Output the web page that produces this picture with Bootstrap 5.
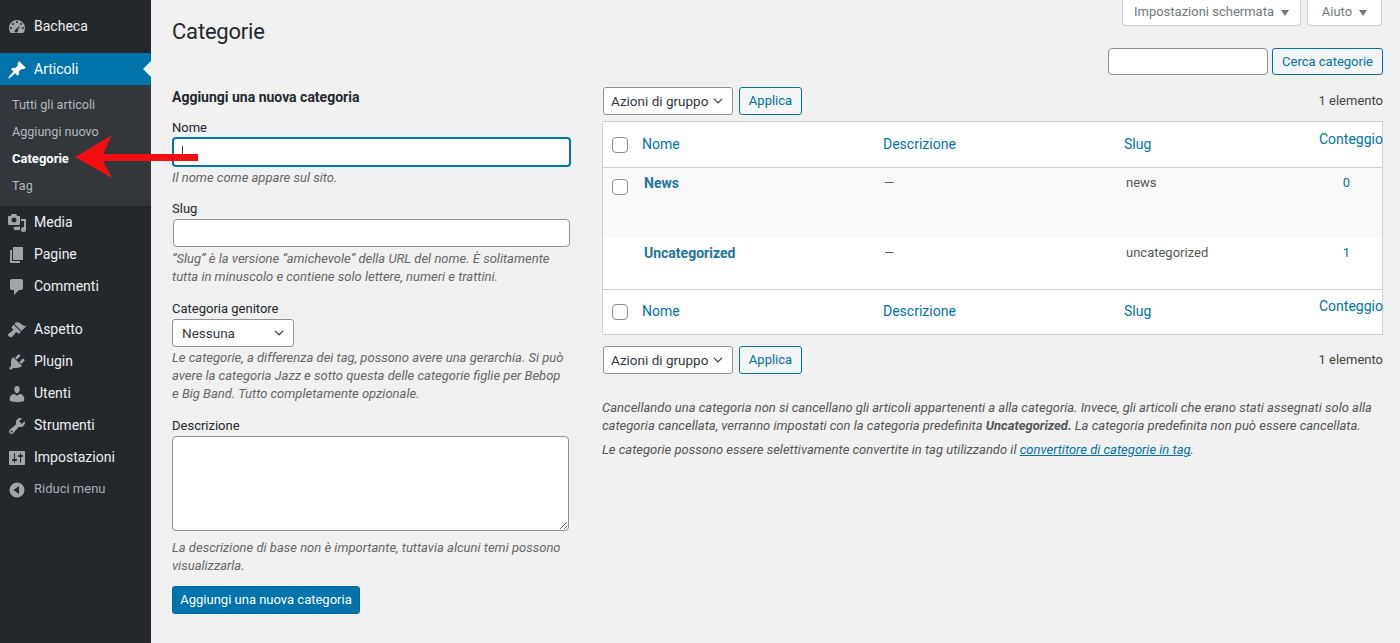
<!doctype html>
<html lang="it">
<head>
<meta charset="utf-8">
<title>Categorie</title>
<link href="https://cdn.jsdelivr.net/npm/bootstrap@5.3.0/dist/css/bootstrap.min.css" rel="stylesheet">
<style>
html,body{height:643px;overflow:hidden}
body{background:#f1f1f1;color:#444;font-family:Roboto,"Liberation Sans",sans-serif;font-size:13px;line-height:18.2px}
.wp-shell{height:643px;position:relative}
.wp-side{width:151px;flex:none;background:#23282d;padding-top:10px}
.wp-item{height:32px;color:#eee;font-size:14px;padding:1px 0 0;gap:0}
.wp-item:hover{color:#eee}
.wp-item svg{width:20px;height:20px;margin-left:7px;margin-right:7px;fill:#a0a5aa;flex:none}
.wp-item.gap-after{margin-bottom:11px}
.wp-item.wp-current{background:#0073aa;color:#fff;position:relative}
.wp-item.wp-current svg{fill:#fff}
.wp-item.wp-current::after{content:"";position:absolute;right:0;top:8px;border:8px solid transparent;border-right-color:#f1f1f1;border-left:0}
.wp-item.wp-muted{color:#a9adb1;font-size:13px}
.wp-sub{background:#32373c;padding:6px 0 7px;margin:0;list-style:none}
.wp-sub a{display:block;height:27px;line-height:27px;padding-left:12px;color:#b4b9be;font-size:12.6px;text-decoration:none}
.wp-sub a.on{color:#fff;font-weight:700;font-size:13px}
.wp-main{flex:1;padding:0 17px 0 21px;min-width:0}
.wp-head{height:48px}
.wp-title{font-size:22px;letter-spacing:-.2px;font-weight:400;color:#23282d;margin:19px 0 0;line-height:26px}
.wp-tabs{gap:6px;margin-right:1px}
.wp-tab{height:26px;background:#fff;border:1px solid #ccd0d4;border-top:0;border-radius:0 0 4px 4px;color:#72777c;padding:0;display:flex;align-items:center;justify-content:center;gap:7px;width:179px}
.wp-tab.wp-tab-sm{width:75px}
.wp-tab i{display:block;border:4.5px solid transparent;border-top:6px solid #72777c;border-bottom:0}
.wp-left{width:398px;flex:none;padding-top:40px}
.wp-right{width:781px;flex:none;margin-left:32px}
.wp-h2{font-size:14px;font-weight:700;color:#23282d;margin:0 0 13px;line-height:18px}
.wp-lab{display:block;margin:0;color:#23282d;line-height:18px}
.wp-lab.wp-lab-14{margin-top:14px}
.wp-lab.wp-lab-13{margin-top:13px}
.wp-input.form-control{height:28px;border:1px solid #8d9297;border-radius:4px;background:#fff;box-shadow:none;font-size:13px;padding:0 8px}
.wp-focus.form-control{height:30px;border:2px solid #0073aa;color:#32373c;margin:0;width:399px;padding:0 8px}
.wp-wide{width:397px;margin-left:1px;margin-top:1px}
.wp-help{font-style:italic;color:#666;margin:3px 0 0;line-height:18.2px;font-size:13px}
.wp-help.wp-help-tight{margin-top:2px}
.wp-select.form-select{height:28px;border:1px solid #8d9297;border-radius:3px;font-size:13.5px;color:#32373c;padding:0 18px 0 7px;background-color:#fff;background-position:right 8px center;background-size:12px 10px;box-shadow:none;line-height:26px}
.wp-select.wp-sel-parent{width:122px;margin-top:1px;padding-left:9px}
.wp-sel-bulk{width:130px;margin-left:1px}
.wp-help.wp-help-select{margin-top:2px}
.wp-area.form-control{height:95px;width:397px;border:1px solid #8d9297;border-radius:4px;margin-top:1px;box-shadow:none}
.wp-primary.btn{background:#0073aa;border:1px solid #006799;color:#fff;border-radius:3px;font-size:13px;height:28px;padding:0;line-height:26px;width:188px;margin-top:10px;white-space:nowrap}
.wp-ghost.btn{background:#f3f5f6;border:1px solid #0071a1;color:#0071a1;border-radius:3px;font-size:13px;height:28px;padding:0;line-height:26px;width:63px;white-space:nowrap}
.wp-ghost.wp-find.btn{height:27px;line-height:25px;width:111px}
.wp-input.wp-search{height:27px;width:160px;flex:none}
.wp-bar{height:28px;gap:6px}
.wp-bar.wp-bar-top{margin-top:12px;margin-bottom:6px}
.wp-bar.wp-bar-bottom{margin-top:11px}
.wp-count{margin-left:auto;color:#444}
.wp-tbl.table{table-layout:fixed;width:781px;margin:0;background:#fff;border:1px solid #ccd0d4;--bs-table-bg:transparent;color:#555;font-size:13px;border-collapse:separate;border-spacing:0}
.wp-tbl th,.wp-tbl td{border:0;padding:0;vertical-align:top;box-shadow:none}
.wp-tbl a{color:#0073aa;text-decoration:none;font-size:14px;font-weight:400}
.wp-tbl thead th{height:46px;border-bottom:1px solid #ccd0d4;vertical-align:middle;padding-left:8px;overflow:visible;white-space:nowrap}
.wp-tbl tfoot th{height:45px;border-top:1px solid #ccd0d4;vertical-align:middle;padding-left:8px;white-space:nowrap}
.wp-tbl thead .cnt-h{vertical-align:top;padding-top:8px;padding-left:8px}
.wp-tbl tfoot .cnt-h{vertical-align:top;padding-top:7px;padding-left:8px}
.wp-tbl .wp-row1 td{background:#f9f9f9;height:70px;padding:6px 0 0 10px}
.wp-tbl .wp-row2 td{background:#fff;height:51px;padding:6px 0 0 10px}
.wp-tbl tbody tr td:nth-child(3){padding-left:9px}
.wp-tbl td a.ttl{font-weight:700;font-size:14px;color:#21759b}
.wp-tbl tbody tr td.num{padding-left:0;text-align:center}
.wp-tbl td.num a{font-size:13px}
.wp-check{display:block;width:16px;height:16px;border:1px solid #8d9297;border-radius:4px;background:#fff;margin:0;appearance:none;-webkit-appearance:none}
.wp-tbl thead th.cb,.wp-tbl tfoot th.cb,.wp-tbl tbody tr td.cb{padding-left:9px}
.wp-tbl .wp-row1 td.cb{padding-top:11px}
.wp-notes{margin-top:25px;font-style:italic;color:#555;font-size:13px}
.wp-notes p{margin:0 0 6px;line-height:18.2px}
.wp-notes a{color:#0073aa}
.wp-arrow{position:absolute;left:70px;top:130px;width:135px;height:55px;pointer-events:none}
.wp-caret{position:absolute;left:182px;top:146px;width:1px;height:14px;background:#32373c}
</style>
</head>
<body>
<div class="wp-shell d-flex">
  <nav class="wp-side">
    <a href="#" class="wp-item gap-after d-flex align-items-center text-decoration-none"><svg viewBox="0 0 20 20"><path d="M3.76 16h12.48A7.97 7.97 0 0 0 18 11a8 8 0 1 0-16 0c0 1.9.66 3.64 1.76 5zM10 4a1 1 0 1 1 0 2 1 1 0 0 1 0-2zM6 6a1 1 0 1 1 0 2 1 1 0 0 1 0-2zm8 0a1 1 0 1 1 0 2 1 1 0 0 1 0-2zM4 10a1 1 0 1 1 0 2 1 1 0 0 1 0-2zm12 0a1 1 0 1 1 0 2 1 1 0 0 1 0-2zm-7.3 2.4L13 8.5l-2.2 5a1.6 1.6 0 1 1-2.1-1.1z" fill-rule="evenodd"/></svg>Bacheca</a>
    <a href="#" class="wp-item wp-current d-flex align-items-center text-decoration-none"><svg viewBox="0 0 20 20"><path d="M10.44 3.02l1.82-1.82 6.36 6.35-1.83 1.82c-1.05-.68-2.48-.57-3.41.36l-.75.75c-.92.93-1.04 2.35-.35 3.41l-1.83 1.82-2.41-2.41-2.8 2.79c-.42.42-3.38 2.71-3.8 2.29s1.86-3.39 2.28-3.81l2.79-2.79L4.1 9.36l1.83-1.82c1.05.69 2.48.57 3.4-.36l.75-.75c.93-.92 1.05-2.35.36-3.41z"/></svg>Articoli</a>
    <ul class="wp-sub">
      <li><a href="#">Tutti gli articoli</a></li>
      <li><a href="#">Aggiungi nuovo</a></li>
      <li><a href="#" class="on">Categorie</a></li>
      <li><a href="#">Tag</a></li>
    </ul>
    <a href="#" class="wp-item d-flex align-items-center text-decoration-none"><svg viewBox="0 0 20 20"><path d="M13 11V4c0-.55-.45-1-1-1h-1.67L9 1H5L3.67 3H2c-.55 0-1 .45-1 1v7c0 .55.45 1 1 1h10c.55 0 1-.45 1-1zM7 4.5a2.5 2.5 0 1 1 0 5 2.5 2.5 0 0 1 0-5zM14 6h5v10.5a2.5 2.5 0 0 1-5 0 2.5 2.5 0 0 1 3-2.45V8h-3V6zm-1 7.5V17H7l-.5-3z"/></svg>Media</a>
    <a href="#" class="wp-item d-flex align-items-center text-decoration-none"><svg viewBox="0 0 20 20"><path d="M6 15V2h10v13H6zm-1 1h8v2H3V5h2v11z"/></svg>Pagine</a>
    <a href="#" class="wp-item gap-after d-flex align-items-center text-decoration-none"><svg viewBox="0 0 20 20"><path d="M5 2h9c1.1 0 2 .9 2 2v7c0 1.1-.9 2-2 2h-2l-5 5v-5H5c-1.1 0-2-.9-2-2V4c0-1.1.9-2 2-2z"/></svg>Commenti</a>
    <a href="#" class="wp-item d-flex align-items-center text-decoration-none"><svg viewBox="0 0 20 20"><path d="M14.48 11.06L7.41 3.99l1.5-1.5c.5-.56 2.3-.47 3.51.32 1.21.8 1.43 1.28 2.91 2.1 1.18.64 2.45 1.26 4.45.85zm-.71.71L6.7 4.7 4.93 6.47c-.39.39-.39 1.02 0 1.41l1.06 1.06c.39.39.39 1.03 0 1.42-.6.6-1.43 1.11-2.21 1.69-.35.26-.7.53-1.01.84C1.43 13.23.7 14.42 1.2 15.5c.2.4 1.4 1.9 2.8 1.8 1-.3 2.2-1.7 3-2.6.58-.78 1.09-1.61 1.69-2.21.39-.39 1.03-.39 1.42 0l1.06 1.06c.39.39 1.02.39 1.41 0z"/></svg>Aspetto</a>
    <a href="#" class="wp-item d-flex align-items-center text-decoration-none"><svg viewBox="0 0 20 20"><path d="M13.11 4.36L9.87 7.6 8 5.73l3.24-3.24c.35-.34 1.05-.2 1.56.32.52.51.66 1.21.31 1.55zm-8 1.77l.91-1.12 9.01 9.01-1.19.84c-.71.71-2.63 1.16-3.82 1.16H6.14L4.9 17.26c-.59.59-1.54.59-2.12 0a1.49 1.49 0 0 1 0-2.12l1.24-1.24v-3.88c0-1.13.4-3.19 1.09-3.89zm7.26 3.97l3.24-3.24c.34-.35 1.04-.21 1.55.31.52.51.66 1.21.31 1.55l-3.24 3.25z"/></svg>Plugin</a>
    <a href="#" class="wp-item d-flex align-items-center text-decoration-none"><svg viewBox="0 0 20 20"><path d="M10 9.25c-2.27 0-2.73-3.44-2.73-3.44C7 4.02 7.82 2 9.97 2c2.16 0 2.98 2.02 2.71 3.81 0 0-.41 3.44-2.68 3.44zm0 2.57L12.72 10c2.39 0 4.52 2.33 4.52 4.53v2.49s-3.65 1.13-7.24 1.13c-3.65 0-7.24-1.13-7.24-1.13v-2.49c0-2.25 1.94-4.48 4.47-4.48z"/></svg>Utenti</a>
    <a href="#" class="wp-item d-flex align-items-center text-decoration-none"><svg viewBox="0 0 20 20"><path d="M16.68 9.77c-1.34 1.34-3.3 1.67-4.95.99l-5.41 6.52c-.99.99-2.59.99-3.58 0s-.99-2.59 0-3.57l6.52-5.42c-.68-1.65-.35-3.61.99-4.95 1.28-1.28 3.12-1.62 4.72-1.06l-2.89 2.89 2.82 2.82 2.86-2.87c.53 1.58.18 3.39-1.08 4.65zM3.81 16.21c.4.39 1.04.39 1.43 0 .4-.4.4-1.04 0-1.43-.39-.4-1.03-.4-1.43 0-.39.39-.39 1.03 0 1.43z"/></svg>Strumenti</a>
    <a href="#" class="wp-item d-flex align-items-center text-decoration-none"><svg viewBox="0 0 20 20"><path d="M18 16V4c0-.55-.45-1-1-1H3c-.55 0-1 .45-1 1v12c0 .55.45 1 1 1h14c.55 0 1-.45 1-1zM8 11h1c.55 0 1 .45 1 1s-.45 1-1 1H8v1.5c0 .28-.22.5-.5.5s-.5-.22-.5-.5V13H6c-.55 0-1-.45-1-1s.45-1 1-1h1V5.5c0-.28.22-.5.5-.5s.5.22.5.5V11zm5-2h-1c-.55 0-1-.45-1-1s.45-1 1-1h1V5.5c0-.28.22-.5.5-.5s.5.22.5.5V7h1c.55 0 1 .45 1 1s-.45 1-1 1h-1v5.5c0 .28-.22.5-.5.5s-.5-.22-.5-.5V9z"/></svg>Impostazioni</a>
    <a href="#" class="wp-item wp-muted d-flex align-items-center text-decoration-none"><svg viewBox="0 0 20 20"><path d="M10 2.5a7.5 7.5 0 1 0 0 15 7.5 7.5 0 0 0 0-15zm2 3.5v8L6.5 10z"/></svg>Riduci menu</a>
  </nav>
  <main class="wp-main">
    <div class="wp-head d-flex justify-content-between align-items-start">
      <h1 class="wp-title">Categorie</h1>
      <div class="wp-tabs d-flex">
        <div class="wp-tab">Impostazioni schermata <i></i></div>
        <div class="wp-tab wp-tab-sm">Aiuto <i></i></div>
      </div>
    </div>
    <div class="d-flex">
      <section class="wp-left">
        <h2 class="wp-h2">Aggiungi una nuova categoria</h2>
        <label class="wp-lab">Nome</label>
        <input class="form-control wp-input wp-focus" type="text">
        <p class="wp-help wp-help-tight">Il nome come appare sul sito.</p>
        <label class="wp-lab wp-lab-13">Slug</label>
        <input class="form-control wp-input wp-wide" type="text">
        <p class="wp-help">“Slug” è la versione “amichevole” della URL del nome. È solitamente tutta in minuscolo e contiene solo lettere, numeri e trattini.</p>
        <label class="wp-lab wp-lab-13">Categoria genitore</label>
        <select class="form-select wp-select wp-sel-parent"><option>Nessuna</option></select>
        <p class="wp-help wp-help-select">Le categorie, a differenza dei tag, possono avere una gerarchia. Si può avere la categoria Jazz e sotto questa delle categorie figlie per Bebop e Big Band. Tutto completamente opzionale.</p>
        <label class="wp-lab wp-lab-14">Descrizione</label>
        <textarea class="form-control wp-area"></textarea>
        <p class="wp-help mt-2">La descrizione di base non è importante, tuttavia alcuni temi possono visualizzarla.</p>
        <button class="btn wp-primary" type="button">Aggiungi una nuova categoria</button>
      </section>
      <section class="wp-right">
        <div class="d-flex justify-content-end gap-1">
          <input class="form-control wp-input wp-search" type="text">
          <button class="btn wp-ghost wp-find" type="button">Cerca categorie</button>
        </div>
        <div class="wp-bar wp-bar-top d-flex align-items-center">
          <select class="form-select wp-select wp-sel-bulk"><option>Azioni di gruppo</option></select>
          <button class="btn wp-ghost" type="button">Applica</button>
          <span class="wp-count">1 elemento</span>
        </div>
        <table class="table wp-tbl">
          <colgroup><col style="width:31px"><col style="width:241px"><col style="width:241px"><col style="width:195px"><col></colgroup>
          <thead><tr>
            <th class="cb"><input class="wp-check" type="checkbox"></th>
            <th><a href="#">Nome</a></th><th><a href="#">Descrizione</a></th><th><a href="#">Slug</a></th><th class="cnt-h"><a href="#">Conteggio</a></th>
          </tr></thead>
          <tbody>
            <tr class="wp-row1"><td class="cb"><input class="wp-check" type="checkbox"></td><td><a href="#" class="ttl">News</a></td><td>—</td><td>news</td><td class="num"><a href="#">0</a></td></tr>
            <tr class="wp-row2"><td class="cb"></td><td><a href="#" class="ttl">Uncategorized</a></td><td>—</td><td>uncategorized</td><td class="num"><a href="#">1</a></td></tr>
          </tbody>
          <tfoot><tr>
            <th class="cb"><input class="wp-check" type="checkbox"></th>
            <th><a href="#">Nome</a></th><th><a href="#">Descrizione</a></th><th><a href="#">Slug</a></th><th class="cnt-h"><a href="#">Conteggio</a></th>
          </tr></tfoot>
        </table>
        <div class="wp-bar wp-bar-bottom d-flex align-items-center">
          <select class="form-select wp-select wp-sel-bulk"><option>Azioni di gruppo</option></select>
          <button class="btn wp-ghost" type="button">Applica</button>
          <span class="wp-count">1 elemento</span>
        </div>
        <div class="wp-notes">
          <p>Cancellando una categoria non si cancellano gli articoli appartenenti a alla categoria. Invece, gli articoli che erano stati assegnati solo alla categoria cancellata, verranno impostati con la categoria predefinita <b>Uncategorized.</b> La categoria predefinita non può essere cancellata.</p>
          <p>Le categorie possono essere selettivamente convertite in tag utilizzando il <a href="#">convertitore di categorie in tag</a>.</p>
        </div>
      </section>
    </div>
  </main>
  <span class="wp-caret"></span>
  <svg class="wp-arrow" viewBox="0 0 135 55"><path fill="#f40d12" d="M5 27 42 5 33 24H128V31H33L42 48z"/></svg>
</div>
</body>
</html>
